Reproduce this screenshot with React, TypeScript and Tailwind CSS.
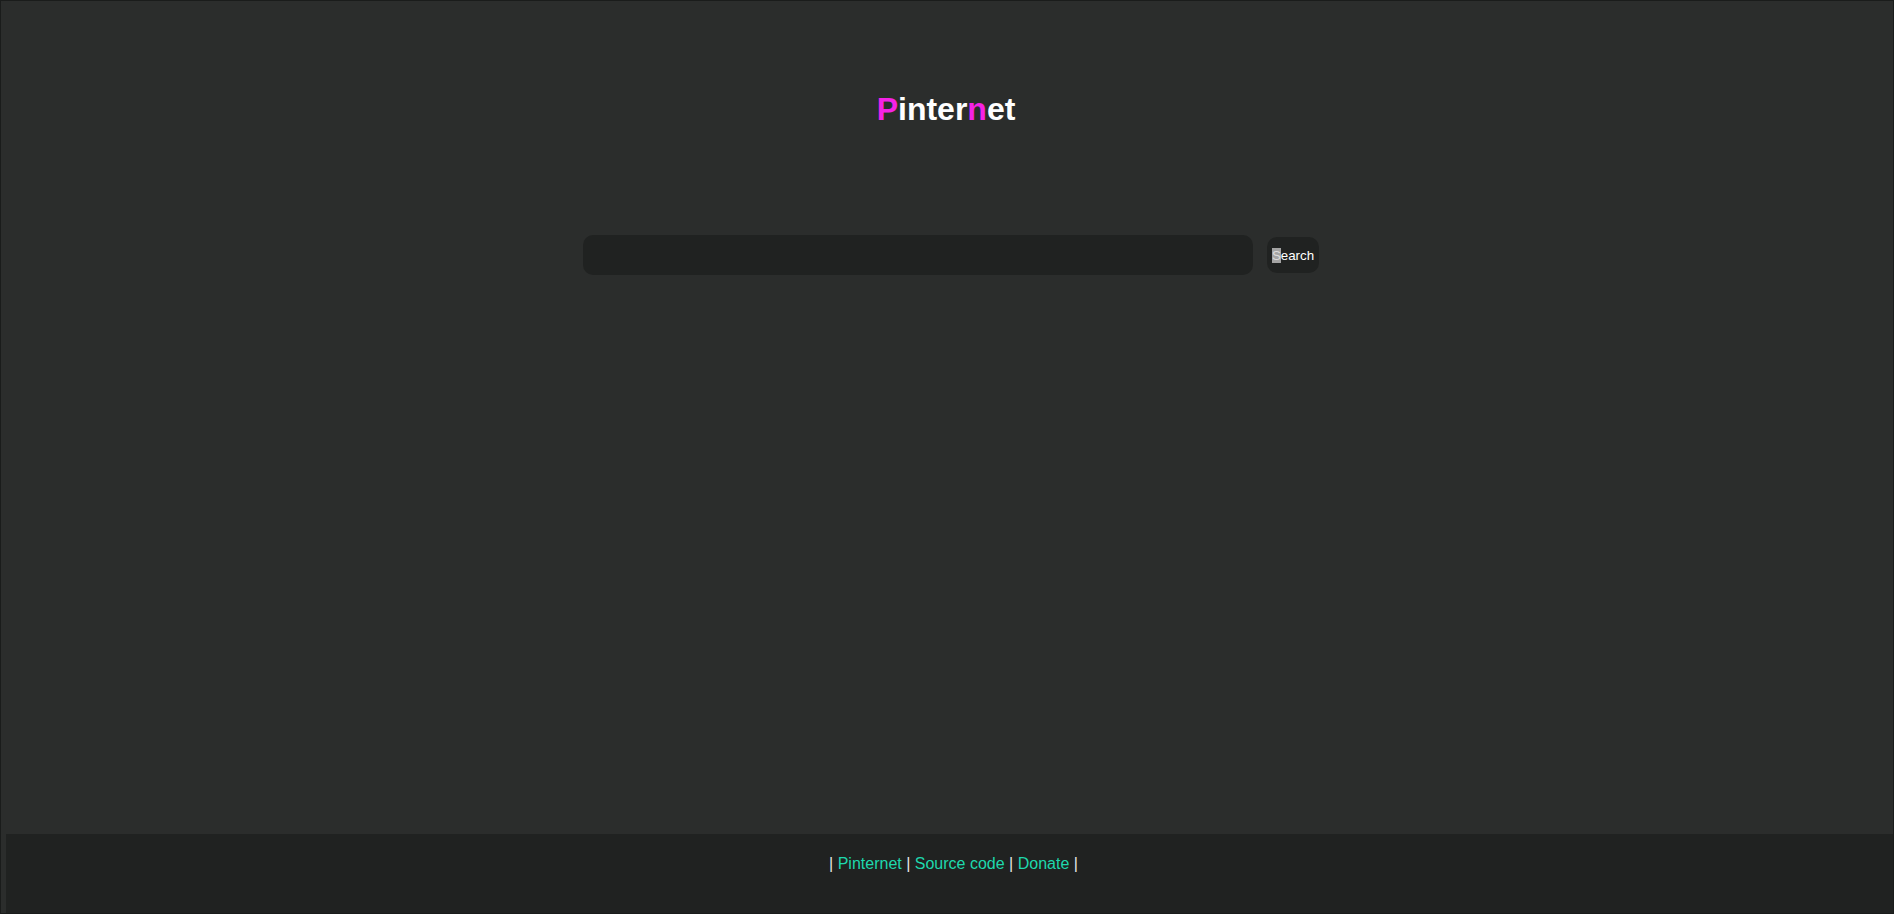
export default function App() {
  return (
    <div
      className="h-[914px] w-full flex flex-col border border-[#1a1c1b] bg-[#2b2d2c] text-white"
      style={{ fontFamily: '"Liberation Sans", Arial, sans-serif' }}
    >
      <h1 className="mt-[92px] pr-[2px] text-center text-[32px] leading-[32px] font-bold">
        <span className="text-[#f522e6]">P</span>inter<span className="text-[#f522e6]">n</span>et
      </h1>

      <form className="mt-[110px] flex items-center justify-center gap-[14px] pl-[8px]" onSubmit={(e) => e.preventDefault()}>
        <input
          type="text"
          className="h-[40px] w-[670px] rounded-[10px] bg-[#202221] px-3 text-white outline-none"
        />
        <button
          type="submit"
          className="h-[36px] w-[52px] rounded-[10px] bg-[#202221] pt-[2px] text-[13.33px] leading-none text-white"
        >
          <span className="bg-[#a3a3a3] text-[#dcdcdc]">S</span>earch
        </button>
      </form>

      <footer className="mt-auto ml-[5px] h-[79px] bg-[#202221] pt-[18px] pl-2 text-center text-base text-[#e6e6e6]">
        |{' '}
        <a href="#" className="text-[#1ed8ad]">Pinternet</a> |{' '}
        <a href="#" className="text-[#1ed8ad]">Source code</a> |{' '}
        <a href="#" className="text-[#1ed8ad]">Donate</a> |
      </footer>
    </div>
  );
}
